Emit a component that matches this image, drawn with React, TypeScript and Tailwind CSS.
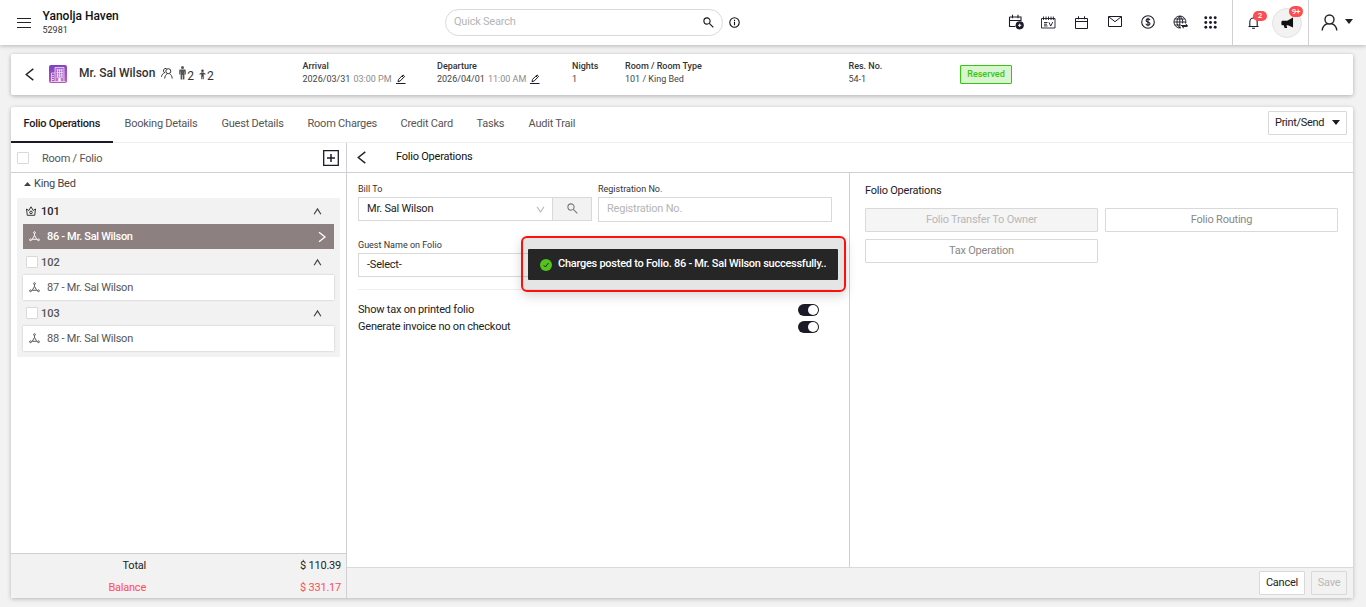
import React from "react";

type IconProps = { className?: string };

const Chevron = ({ d, className }: { d: string; className?: string }) => (
  <svg viewBox="0 0 12 12" className={className} fill="none" stroke="currentColor" strokeWidth="1.3">
    <path d={d} />
  </svg>
);
const LEFT = "M9.5 .8 3 6l6.500 5.200";
const RIGHT = "M3 1.200 9 6 3 10.800";
const UP = "M2.300 9 6 3.200l3.700 5.800";
const DOWN = "M2.300 3.200l3.700 5.500 3.700-5.500";

const CalendarPlus = () => (
  <svg width="17" height="17" viewBox="0 0 17 17" fill="none" stroke="#1d1a27" strokeWidth="1.1">
    <path d="M2.500 3h11.500v4M2.500 3v9.500h6M2.500 6.500h11.500M5.500 .8v3.400M11 .8v3.400" />
    <circle cx="12.700" cy="11.300" r="4.100" fill="#1d1a27" stroke="none" />
    <path d="M12.700 9.700v3.200M11.100 11.300h3.200" stroke="#fff" strokeWidth="1" />
  </svg>
);
const EventIcon = () => (
  <svg width="15" height="13" viewBox="0 0 15 13" fill="none" stroke="#1d1a27" strokeWidth="1">
    <path d="M.5 2.500h13.500v9.500H.5zM2.500 .5v3.500M5 .5v3.500M7.500 .5v3.500M10 .5v3.500M12.300 .5v3.500M3 6.500h3.500M3 8.200h3M3 9.900h3.500M8 6.300l1.700 3.800 2-4" strokeWidth=".9" />
  </svg>
);
const CalendarIcon = () => (
  <svg width="13" height="13" viewBox="0 0 13 13" fill="none" stroke="#1d1a27" strokeWidth="1">
    <path d="M.5 2.500h12v10H.5zM.5 5.500h12M3.500 .3v3M9.500 .3v3" />
  </svg>
);
const MailIcon = () => (
  <svg width="14" height="12" viewBox="0 0 14 12" fill="none" stroke="#1d1a27" strokeWidth="1">
    <path d="M.5 .5h13v10H.5zM.8 .8 7 5.700l6.200-4.900" />
  </svg>
);
const DollarIcon = () => (
  <svg width="14" height="14" viewBox="0 0 14 14" fill="none" stroke="#1d1a27" strokeWidth="1.100">
    <circle cx="7" cy="7" r="6.300" />
    <path d="M9 5.200C8.800 4.200 8 3.900 7 3.900s-1.900.4-1.900 1.500S6 6.700 7 7s2 .6 2 1.700-1 1.500-2 1.500-1.900-.4-2-1.500M7 2.800v8.400" />
  </svg>
);
const GlobeIcon = () => (
  <svg width="15" height="14" viewBox="0 0 15 14" fill="none" stroke="#1d1a27" strokeWidth=".95">
    <path d="M12.800 8.200A6 6 0 1 0 8 12.900M6.800 1v12M1 7h12M1.900 4h9.800M1.900 10h5.600M6.800 1C3 4.500 3 9.500 6.800 13M6.800 1c2.600 2.300 3.300 4.800 2.700 7.500" />
    <path d="M8 10.500h6.500l-2-1.700M14.500 11.500H9l2 1.700" />
  </svg>
);
const GridIcon = () => (
  <svg width="13" height="13" viewBox="0 0 13 13" fill="#1d1a27">
    {[1.8, 6.500, 11.200].map((y) =>
      [1.8, 6.500, 11.200].map((x) => <circle key={`${x}-${y}`} cx={x} cy={y} r="1.450" />)
    )}
  </svg>
);
const BellIcon = () => (
  <svg width="11" height="13" viewBox="0 0 11 13" fill="none" stroke="#1d1a27" strokeWidth="1.100">
    <path d="M.5 10.500h10M1.800 10.500V6c0-2.600 1.600-4 3.700-4s3.700 1.400 3.700 4v4.500M5.500 .5v1.500M4 12.200h3" />
  </svg>
);
const MegaphoneIcon = () => (
  <svg width="13" height="12" viewBox="0 0 14 13" fill="#111">
    <path d="M13 .5v11L7.500 9H6l.6 2.800H3.800L3 9H1.800C.9 9 .4 8.300 .4 7.500V5.500c0-.8.5-1.500 1.400-1.500h5z" />
  </svg>
);
const UserIcon = () => (
  <svg width="17" height="17" viewBox="0 0 17 17" fill="none" stroke="#222" strokeWidth="1.400">
    <circle cx="8.500" cy="5.500" r="4.500" />
    <path d="M1.200 16.500c.3-3.800 2.600-6 5.300-6.800M15.800 16.500c-.3-3.800-2.600-6-5.300-6.800" />
  </svg>
);
const Caret = ({ className }: IconProps) => (
  <svg width="8" height="5" viewBox="0 0 8 5" className={className} fill="currentColor">
    <path d="M0 0h8L4 5z" />
  </svg>
);
const SearchIcon = ({ className }: IconProps) => (
  <svg width="11" height="11" viewBox="0 0 11 11" className={className} fill="none" stroke="currentColor" strokeWidth="1.100">
    <circle cx="4" cy="4" r="3.100" />
    <path d="M6.300 6.300l4 4" />
  </svg>
);
const HotelIcon = () => (
  <svg width="18" height="18" viewBox="0 0 18 18">
    <defs>
      <linearGradient id="hotel" x1="0" y1="0" x2="0.300" y2="1">
        <stop offset="0" stopColor="#7a3fc4" />
        <stop offset="1" stopColor="#b25ab8" />
      </linearGradient>
    </defs>
    <rect width="18" height="18" rx="2" fill="url(#hotel)" />
    <path d="M6 2.500h9v14H6z" fill="#fff" fillOpacity=".18" />
    <g fill="none" stroke="#f0e0fa" strokeWidth=".8">
      <path d="M6 16.500v-14h9v14M2.500 16.500v-8.500H6M1.500 16.500h15M8.500 4v8M10.500 4v8M12.700 4v8M7.500 5h6.500M7.500 7.500h6.500M7.500 10h6.500M7.500 12.300h6.500M3 10.500h2M3 12.500h2M3 14.500h2" />
    </g>
    <path d="M9.300 13.200h2.400v3.300H9.300z" fill="#fff" />
  </svg>
);
const GuestsIcon = () => (
  <svg width="12" height="12" viewBox="0 0 12 12" fill="none" stroke="#333" strokeWidth="1">
    <circle cx="7.300" cy="4.200" r="2.500" />
    <path d="M3.700 11.500c.1-2.500 1.300-4 2.600-4.700M11.200 11.500c-.1-2.500-1.300-4-2.600-4.700M4 5.800A2.200 2.200 0 1 1 5.500 1.500M.5 9.800c.2-2 1.500-3.500 3-4" />
  </svg>
);
const AdultIcon = () => (
  <svg width="7" height="14" viewBox="0 0 7 14" fill="#555">
    <circle cx="3.500" cy="1.500" r="1.500" />
    <path d="M1.300 3.400h4.400c.8 0 1.100.5 1.100 1.200V8.500H5.700V5.500h-.3V13.500H3.800V9h-.6v4.500H1.600v-8h-.3v3H.2V4.600c0-.7.3-1.200 1.100-1.200z" />
  </svg>
);
const ChildIcon = () => (
  <svg width="7" height="11" viewBox="0 0 8 12" fill="#444">
    <circle cx="4" cy="1.700" r="1.500" />
    <path d="M2.600 3.600h2.800L7.700 5.500l-.7.900-1.600-1v6H4.300V8.500h-.6v2.900H2.600v-6L1 6.400l-.7-.9z" />
  </svg>
);
const EditIcon = () => (
  <svg width="10" height="11" viewBox="0 0 10 11" fill="none" stroke="#1d1a27" strokeWidth="1">
    <path d="M2 7.700l.5-2.300L7 .9l1.600 1.500L4.200 7zM6 2l1.500 1.500" />
    <path d="M0 9.500h9.500" strokeWidth="1" />
  </svg>
);
const CrownIcon = () => (
  <svg width="10" height="10" viewBox="0 0 10 10" fill="none" stroke="#222" strokeWidth=".9">
    <path d="M1.300 9.300.5 3l2.300 1.500L5 .8l2.200 3.700L9.500 3l-.8 6.300z" />
    <circle cx="5" cy="6.400" r="1.300" />
  </svg>
);
const FolioIcon = () => (
  <svg width="11" height="11" viewBox="0 0 11 11" fill="none" stroke="currentColor" strokeWidth=".95" className="shrink-0">
    <circle cx="5.500" cy="1.600" r=".9" />
    <circle cx="1.500" cy="8.800" r=".9" />
    <circle cx="9.500" cy="8.800" r=".9" />
    <path d="M5.500 2.500v1.800M5.500 4.300 3.300 8.300h4.400zM2.400 8.800l1-.5M8.600 8.800l-1-.5" />
  </svg>
);

const Checkbox = () => <span className="block h-3 w-3 shrink-0 rounded-[1px] border border-[#d9d9d9] bg-white" />;

const Toggle = () => (
  <span className="flex h-3 w-[21px] items-center justify-end rounded-full bg-[#1d1a27] pr-[1px]">
    <span className="block h-2.5 w-2.5 rounded-full bg-white" />
  </span>
);

const Info = ({ label, value, className }: { label: string; value: React.ReactNode; className: string }) => (
  <div className={`shrink-0 text-[9px] leading-[13px] tracking-normal ${className}`}>
    <div className="font-medium text-[#333]">{label}</div>
    <div className="flex text-[#444]">{value}</div>
  </div>
);

const DateValue = ({ date, time }: { date: string; time: string }) => (
  <>
    <span>{date}</span>
    <span className="ml-[3px] mr-1 text-[#8c8c8c]">{time}</span>
    <span className="pt-px"><EditIcon /></span>
  </>
);

const RoomHeader = ({ no, crown }: { no: string; crown?: boolean }) => (
  <div className="flex h-[26px] items-center pl-[3px] pr-[11px] tracking-normal">
    {crown ? <span className="mr-[5px]"><CrownIcon /></span> : <span className="mr-[4px]"><Checkbox /></span>}
    <span className={crown ? "flex-1 pt-px font-medium text-[#222]" : "-ml-px flex-1 pt-px font-medium text-[#555]"}>{no}</span>
    <Chevron d={UP} className="h-[11px] w-[11px] text-[#444]" />
  </div>
);

const FolioRow = ({ name, active }: { name: string; active?: boolean }) => (
  <div
    className={
      active
        ? "flex h-[25px] items-center bg-[#8c8080] pl-1.5 pr-1.5 font-medium tracking-[-0.32px] text-white"
        : "flex h-[25px] items-center bg-white pl-1.5 pr-1.5 text-[#555] shadow-[0_0_2px_rgba(0,0,0,0.2)]"
    }
  >
    <FolioIcon />
    <span className="ml-[7px] flex-1">{name}</span>
    {active && <Chevron d={RIGHT} className="h-3 w-3" />}
  </div>
);

const tabs: [string, string][] = [
  ["Folio Operations", "w-[101px]"],
  ["Booking Details", "w-[97px]"],
  ["Guest Details", "w-[86px]"],
  ["Room Charges", "w-[93px]"],
  ["Credit Card", "w-[76px]"],
  ["Tasks", "w-[52px]"],
  ["Audit Trail", "w-[70px]"],
];

export default function App() {
  return (
    <div className="flex h-[607px] w-[1366px] flex-col overflow-hidden bg-[#f2f2f2] font-[Roboto,sans-serif] text-[11px] leading-[14px] tracking-[-0.22px] text-[#222]">
      <header className="relative flex h-[45px] shrink-0 items-center bg-white shadow-[0_1px_4px_rgba(0,0,0,0.25)]">
        <div className="ml-[17px] flex h-[10px] w-[14px] flex-col justify-between">
          <span className="h-px bg-[#222]" />
          <span className="h-px bg-[#222]" />
          <span className="h-px bg-[#222]" />
        </div>
        <div className="ml-[11.500px] w-[402.500px] tracking-normal">
          <div className="text-[12px] font-medium leading-[14px] text-[#111]">Yanolja Haven</div>
          <div className="pt-px text-[9px] leading-[13px] text-[#333]">52981</div>
        </div>
        <div className="flex h-[27px] w-[278px] items-center rounded-full border border-[#d9d9d9] pl-2 pr-[8px]">
          <span className="flex-1 pb-[2px] text-[#b5b5b5]">Quick Search</span>
          <SearchIcon className="text-[#111]" />
        </div>
        <svg width="11" height="11" viewBox="0 0 11 11" className="ml-[6px]" fill="none" stroke="#111" strokeWidth="1.100">
          <circle cx="5.500" cy="5.500" r="4.700" />
          <path d="M5.500 4.700v3.500M5.500 2.800v1.100" />
        </svg>
        <div className="ml-auto flex h-[45px] items-center">
          <div className="flex items-center pb-px [&>span]:flex [&>span]:w-[33px] [&>span]:justify-center">
            <span><CalendarPlus /></span>
            <span><EventIcon /></span>
            <span><CalendarIcon /></span>
            <span><MailIcon /></span>
            <span><DollarIcon /></span>
            <span><GlobeIcon /></span>
          </div>
          <span className="ml-[7px] mr-[15px]"><GridIcon /></span>
          <div className="flex h-[45px] w-[77px] items-center border-x border-[#d0d0d8] pl-[15px]">
            <span className="relative">
              <BellIcon />
              <span className="absolute -top-[5px] left-[5px] h-[10px] w-[14px] rounded-full bg-[#ff4d4f] text-center text-[8px] font-medium leading-[10px] tracking-normal text-white">2</span>
            </span>
            <span className="relative ml-[13px] flex h-[30px] w-[30px] items-center justify-center rounded-full border border-[#e2e2e2] bg-[#f2f2f2]">
              <MegaphoneIcon />
              <span className="absolute -top-[3px] left-[16px] h-[11px] w-[14px] rounded-full bg-[#ff4d4f] text-center text-[8px] font-medium leading-[11px] text-white">9+</span>
            </span>
          </div>
          <div className="flex w-[57px] items-center pl-[12px]">
            <UserIcon />
            <Caret className="mb-[2px] ml-[7px] text-[#222]" />
          </div>
        </div>
      </header>

      <section className="mx-[11px] mr-[13px] mt-[9px] flex h-[41px] shrink-0 items-start rounded-[2px] bg-white shadow-[0_1px_4px_rgba(0,0,0,0.28)]">
        <div className="flex w-[291.500px] items-center tracking-normal">
          <Chevron d={LEFT} className="ml-[12px] mt-[11px] h-[13px] w-[13px] text-[#222]" />
          <span className="ml-[13px] mt-[11px]"><HotelIcon /></span>
          <span className="ml-3 mt-[9px] text-[12px] font-medium text-[#333]">Mr. Sal Wilson</span>
          <span className="ml-[6px] mt-[9px]"><GuestsIcon /></span>
          <span className="ml-[6px] mt-[8px]"><AdultIcon /></span>
          <span className="ml-px mt-[14px] text-[12px] text-[#333]">2</span>
          <span className="ml-[5px] mt-[11px]"><ChildIcon /></span>
          <span className="ml-[1px] mt-[14px] text-[12px] text-[#333]">2</span>
        </div>
        <Info className="mt-[6px] w-[134.500px]" label="Arrival" value={<DateValue date="2026/03/31" time="03:00 PM" />} />
        <Info className="mt-[6px] w-[135px]" label="Departure" value={<DateValue date="2026/04/01" time="11:00 AM" />} />
        <Info className="mt-[6px] w-[53px]" label="Nights" value="1" />
        <Info className="mt-[6px] w-[223.500px]" label="Room / Room Type" value="101 / King Bed" />
        <Info className="mt-[6px] w-[111.500px]" label="Res. No." value="54-1" />
        <span className="mt-[11px] h-[19px] w-[52px] rounded-[1px] border border-[#34c70d] bg-[#d8f5d0] text-center text-[9px] font-medium leading-[17px] tracking-normal text-[#34c70d]">Reserved</span>
      </section>

      <main className="mx-[11px] mr-[13px] mt-[12px] flex h-[491px] shrink-0 flex-col rounded-[2px] bg-white shadow-[0_1px_4px_rgba(0,0,0,0.25)]">
        <nav className="flex h-9 shrink-0 border-b border-[#eee]">
          {tabs.map(([t, w], i) => (
            <div
              key={t}
              className={
                i === 0
                  ? "mb-[-1px] w-[102px] shrink-0 border-b-2 border-[#1d1a27] pl-[12.500px] pt-[10px] font-medium tracking-[-0.25px] text-[#1d1a27]"
                  : `shrink-0 pl-[11.500px] pt-[10px] text-[#555] ${w}`
              }
            >
              {t}
            </div>
          ))}
          <button className="ml-auto mr-1.5 mt-1 flex h-6 w-[79px] items-center rounded-[1px] border border-[#d9d9d9] pl-1.5 text-[#1d1a27]">
            <span className="tracking-[-0.3px]">Print/Send</span>
            <Caret className="mb-px ml-2" />
          </button>
        </nav>
        <div className="flex min-h-0 flex-1">
          <aside className="flex w-[336px] shrink-0 flex-col border-r border-[#d0d0d4]">
            <div className="flex h-[30px] shrink-0 items-center border-b border-[#d0d0d4] pl-1.5 pr-[7px]">
              <Checkbox />
              <span className="ml-[13px] flex-1 pt-[2px] text-[#555]">Room / Folio</span>
              <svg width="16" height="16" viewBox="0 0 16 16" fill="none" stroke="#1d1a27">
                <path d="M.7.700h14.600v14.600H.7z" strokeWidth="1.300" />
                <path d="M8 4v8M4 8h8" strokeWidth="1.500" />
              </svg>
            </div>
            <div className="flex h-[25px] shrink-0 items-center pb-[4px] pl-[13px] text-[#444]">
              <svg width="7" height="4" viewBox="0 0 7 4" className="mr-[3px]" fill="#444"><path d="M0 4h7L3.500 0z" /></svg>
              King Bed
            </div>
            <div className="ml-1.5 mr-1.5 rounded-[1px] bg-[#f2f2f2] px-1.5 pb-[6px]">
              <RoomHeader no="101" crown />
              <FolioRow name="86 - Mr. Sal Wilson" active />
              <RoomHeader no="102" />
              <FolioRow name="87 - Mr. Sal Wilson" />
              <RoomHeader no="103" />
              <FolioRow name="88 - Mr. Sal Wilson" />
            </div>
            <div className="mt-auto flex h-[45px] shrink-0 flex-col border-t border-[#d0d0d4] bg-[#f2f2f2] pr-[5px] leading-[22px]">
              <div className="flex h-[22px] pt-px"><span className="w-[135px] text-right">Total</span><span className="flex-1 text-right">$ 110.39</span></div>
              <div className="flex h-[22px] pt-px text-[#ff4d5a]"><span className="w-[135px] text-right">Balance</span><span className="flex-1 text-right">$ 331.17</span></div>
            </div>
          </aside>

          <div className="flex flex-1 flex-col">
            <div className="flex h-[30px] shrink-0 items-center border-b border-[#d0d0d4] pl-[8px]">
              <Chevron d={LEFT} className="h-[13px] w-[13px] text-[#222]" />
              <span className="ml-7 pb-px text-[#111]">Folio Operations</span>
            </div>
            <div className="flex min-h-0 flex-1">
              <div className="relative w-[503px] shrink-0 border-r border-[#d0d0d4] pl-[11px] pt-[10px]">
                <div className="flex gap-[6px]">
                  <div className="w-[234px]">
                    <div className="mb-px text-[9px] leading-[13px] tracking-normal text-[#333]">Bill To</div>
                    <div className="flex h-6 border border-[#d9d9d9]">
                      <div className="flex flex-1 items-center pl-2 pr-[6px]">
                        <span className="flex-1">Mr. Sal Wilson</span>
                        <Chevron d={DOWN} className="h-[11px] w-[11px] text-[#bbb]" />
                      </div>
                      <div className="flex w-[39px] items-center justify-center border-l border-[#d9d9d9] bg-[#f2f2f2] pb-[2px]">
                        <SearchIcon className="text-[#777]" />
                      </div>
                    </div>
                  </div>
                  <div className="w-[234px]">
                    <div className="mb-px text-[9px] leading-[13px] tracking-normal text-[#333]">Registration No.</div>
                    <div className="flex h-[25px] items-center border border-[#d9d9d9] pb-px pl-2 text-[#b5b5b5]">Registration No.</div>
                  </div>
                </div>
                <div className="mb-px mt-[17px] text-[9px] leading-[13px] tracking-normal text-[#333]">Guest Name on Folio</div>
                <div className="flex h-6 w-[234px] items-center border border-[#d9d9d9] pb-px pl-2">-Select-</div>
                <div className="mt-[12px] w-[474px] border-t border-[#eee]" />
                <div className="mt-[11px] flex w-[461px] flex-col">
                  <div className="flex h-[17px] items-center justify-between"><span>Show tax on printed folio</span><Toggle /></div>
                  <div className="flex h-[17px] items-center justify-between"><span>Generate invoice no on checkout</span><Toggle /></div>
                </div>

                <div className="absolute left-[174px] top-[63px] z-10 h-[56px] w-[325px] rounded-[6px] border-2 border-[#fb0f0f] bg-black/[0.1] p-[5px] pt-[11px] shadow-[0_4px_12px_rgba(0,0,0,0.16)]">
                  <div className="flex h-[31px] w-[310px] items-center rounded-[1px] bg-[#222]/[0.98] pl-3 font-medium text-white">
                    <svg width="12" height="12" viewBox="0 0 12 12" className="shrink-0">
                      <circle cx="6" cy="6" r="6" fill="#52c41a" />
                      <path d="M3.700 6.200l1.700 1.800 3-3.900" fill="none" stroke="#222" strokeWidth="1" />
                    </svg>
                    <span className="ml-[6px] whitespace-nowrap pb-[2px] tracking-[-0.26px]">Charges posted to Folio. 86 - Mr. Sal Wilson successfully..</span>
                  </div>
                </div>
              </div>
              <div className="flex-1 pl-[15px] pr-[15px] pt-[11px]">
                <div className="text-[#1d1a27]">Folio Operations</div>
                <div className="mt-[10px] grid grid-cols-2 gap-[7px] text-[#888]">
                  <button className="h-6 rounded-[1px] border border-[#d9d9d9] bg-[#f5f5f5] text-[#b8b8b8]">Folio Transfer To Owner</button>
                  <button className="h-6 rounded-[1px] border border-[#d9d9d9]">Folio Routing</button>
                  <button className="h-6 rounded-[1px] border border-[#d9d9d9]">Tax Operation</button>
                </div>
              </div>
            </div>
            <div className="flex h-[31px] shrink-0 items-start justify-end gap-1.5 border-t border-[#d9d9d9] bg-[#f2f2f2] pr-1.5 pt-[3px]">
              <button className="h-6 w-[46px] rounded-[1px] border border-[#d9d9d9] bg-white text-[#222]">Cancel</button>
              <button className="h-6 w-[36px] rounded-[1px] border border-[#d9d9d9] text-[#b8b8b8]">Save</button>
            </div>
          </div>
        </div>
      </main>
    </div>
  );
}
